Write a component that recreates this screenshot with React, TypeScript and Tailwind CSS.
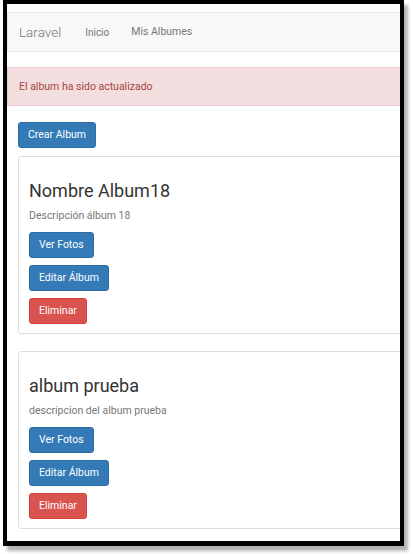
const albums = [
  { id: 18, name: "Nombre Album18", description: "Descripción álbum 18" },
  { id: 19, name: "album prueba", description: "descripcion del album prueba" },
];

const Btn: React.FC<{ label: string; danger?: boolean }> = ({ label, danger }) => (
  <button
    className={
      danger
        ? "h-[26px] rounded-[3px] border border-[#d43f3a] bg-[#d9534f] px-[9px] text-[10.5px] text-white"
        : "h-[26px] rounded-[3px] border border-[#2e6da4] bg-[#337ab7] px-[9px] text-[10.5px] text-white"
    }
  >
    {label}
  </button>
);

const AlbumCard: React.FC<{ name: string; description: string }> = ({ name, description }) => (
  <div className="w-[420px] rounded-[3px] border border-[#ddd] px-[10px] pt-[24px] pb-[9px]">
    <h3 className="text-[18px] leading-[20px] text-[#333]">{name}</h3>
    <p className="mt-[8px] text-[10.5px] leading-[14px] text-[#777]">{description}</p>
    <div className="mt-[9px] flex flex-col items-start gap-[7px]">
      <Btn label="Ver Fotos" />
      <Btn label="Editar Álbum" />
      <Btn label="Eliminar" danger />
    </div>
  </div>
);

export default function App() {
  return (
    <div className="h-[554px] w-[413px] bg-white font-['Roboto',sans-serif]">
      <div className="ml-[3px] h-[546px] w-[401px] overflow-hidden border-4 border-b-[5px] border-black bg-white shadow-[4px_5px_3px_rgba(0,0,0,0.3)]">
        <nav className="mt-[8px] flex h-[40px] w-[420px] items-center border border-[#e7e7e7] bg-[#f8f8f8] pl-[11px]">
          <span className="text-[13.5px] font-light text-[#777]">Laravel</span>
          <span className="ml-[24px] text-[10px] text-[#777]">Inicio</span>
          <span className="ml-[22px] text-[10.5px] text-[#777]">Mis Albumes</span>
        </nav>
        <div className="mt-[15px] flex h-[39px] w-[420px] items-center border border-[#ebccd1] bg-[#f2dede] pl-[11px] text-[10.5px] text-[#a94442]">
          El album ha sido actualizado
        </div>
        <div className="mt-[16px] flex flex-col items-start pl-[11px]">
          <Btn label="Crear Album" />
          <div className="mt-[8px] flex flex-col gap-[17px]">
            {albums.map((a) => (
              <AlbumCard key={a.id} name={a.name} description={a.description} />
            ))}
          </div>
        </div>
      </div>
    </div>
  );
}
